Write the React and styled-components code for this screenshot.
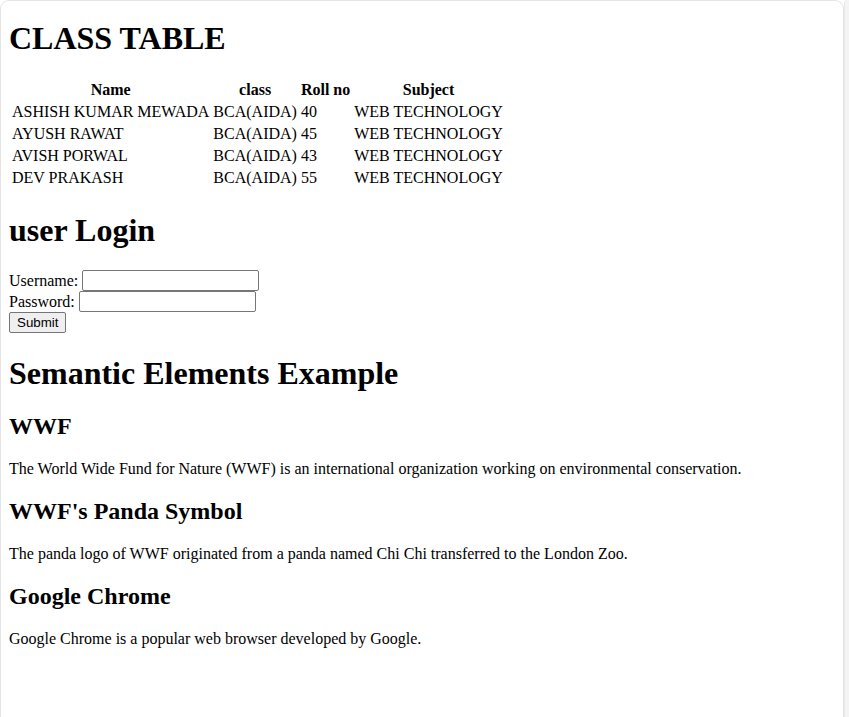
import React from "react";
import styled, { createGlobalStyle } from "styled-components";

const GlobalStyle = createGlobalStyle`
  html, body {
    margin: 0;
    padding: 0;
    background: #ffffff;
  }
  body {
    font-family: "Liberation Serif", "Times New Roman", serif;
    font-size: 16px;
    color: #000;
  }
`;

const students = [
  { name: "ASHISH KUMAR MEWADA", cls: "BCA(AIDA)", roll: 40, subject: "WEB TECHNOLOGY" },
  { name: "AYUSH RAWAT", cls: "BCA(AIDA)", roll: 45, subject: "WEB TECHNOLOGY" },
  { name: "AVISH PORWAL", cls: "BCA(AIDA)", roll: 43, subject: "WEB TECHNOLOGY" },
  { name: "DEV PRAKASH", cls: "BCA(AIDA)", roll: 55, subject: "WEB TECHNOLOGY" },
];

const articles = [
  {
    title: "WWF",
    text: "The World Wide Fund for Nature (WWF) is an international organization working on environmental conservation.",
  },
  {
    title: "WWF's Panda Symbol",
    text: "The panda logo of WWF originated from a panda named Chi Chi transferred to the London Zoo.",
  },
  {
    title: "Google Chrome",
    text: "Google Chrome is a popular web browser developed by Google.",
  },
];

export default function App() {
  return (
    <>
      <GlobalStyle />
      <Page>
        <Frame>
          <Content>
            <Title $first>CLASS TABLE</Title>
            <Table>
              <thead>
                <tr>
                  <Th>Name</Th>
                  <Th>class</Th>
                  <Th>Roll no</Th>
                  <Th>Subject</Th>
                </tr>
              </thead>
              <tbody>
                {students.map((s) => (
                  <tr key={s.name}>
                    <Td>{s.name}</Td>
                    <Td>{s.cls}</Td>
                    <Td>{s.roll}</Td>
                    <Td>{s.subject}</Td>
                  </tr>
                ))}
              </tbody>
            </Table>

            <Title>user Login</Title>
            <Form onSubmit={(e) => e.preventDefault()}>
              <Field>
                Username: <Input type="text" />
              </Field>
              <Field>
                Password: <Input type="password" />
              </Field>
              <Button type="submit">Submit</Button>
            </Form>

            <Title>Semantic Elements Example</Title>
            {articles.map((a) => (
              <article key={a.title}>
                <SubTitle>{a.title}</SubTitle>
                <Para>{a.text}</Para>
              </article>
            ))}
          </Content>
        </Frame>
        <Gutter />
      </Page>
    </>
  );
}

const Page = styled.div`
  display: flex;
  min-height: 717px;
`;

const Frame = styled.div`
  flex: 1;
  border: 1px solid #e4e4e4;
  border-bottom: none;
  border-radius: 9px 9px 0 0;
  background: #ffffff;
`;

const Gutter = styled.div`
  width: 4px;
  background: #f4f4f4;
  border-left: 1px solid #e8e8e8;
  border-top-left-radius: 3px;
`;

const Content = styled.div`
  padding: 0 8px 8px;
  overflow: hidden;
`;

const Title = styled.h1`
  font-size: 32px;
  font-weight: bold;
  margin: ${(p) => (p.$first ? "19px 0 21px" : "22px 0 21px")};
`;

const SubTitle = styled.h2`
  font-size: 24px;
  font-weight: bold;
  margin: 20px 0;
`;

const Table = styled.table`
  border-collapse: separate;
  border-spacing: 2px;
  font-size: 16px;
`;

const Th = styled.th`
  padding: 1px;
  font-weight: bold;
  text-align: center;
`;

const Td = styled.td`
  padding: 1px;
  text-align: left;
`;

const Form = styled.form`
  display: flex;
  flex-direction: column;
  align-items: flex-start;
`;

const Field = styled.label`
  display: flex;
  align-items: center;
  gap: 4px;
  height: 21px;
`;

const Input = styled.input`
  box-sizing: border-box;
  width: 177px;
  height: 21px;
  padding: 1px 2px;
  border: 1px solid #767676;
  border-radius: 2px;
  font-family: Arial, "Liberation Sans", sans-serif;
  font-size: 13.33px;
`;

const Button = styled.button`
  box-sizing: border-box;
  height: 21px;
  font-family: Arial, "Liberation Sans", sans-serif;
  font-size: 13.33px;
  padding: 1px 7px;
  background: #efefef;
  border: 1px solid #767676;
  border-radius: 2px;
  color: #000;
`;

const Para = styled.p`
  font-size: 16px;
  margin: 16px 0;
`;
